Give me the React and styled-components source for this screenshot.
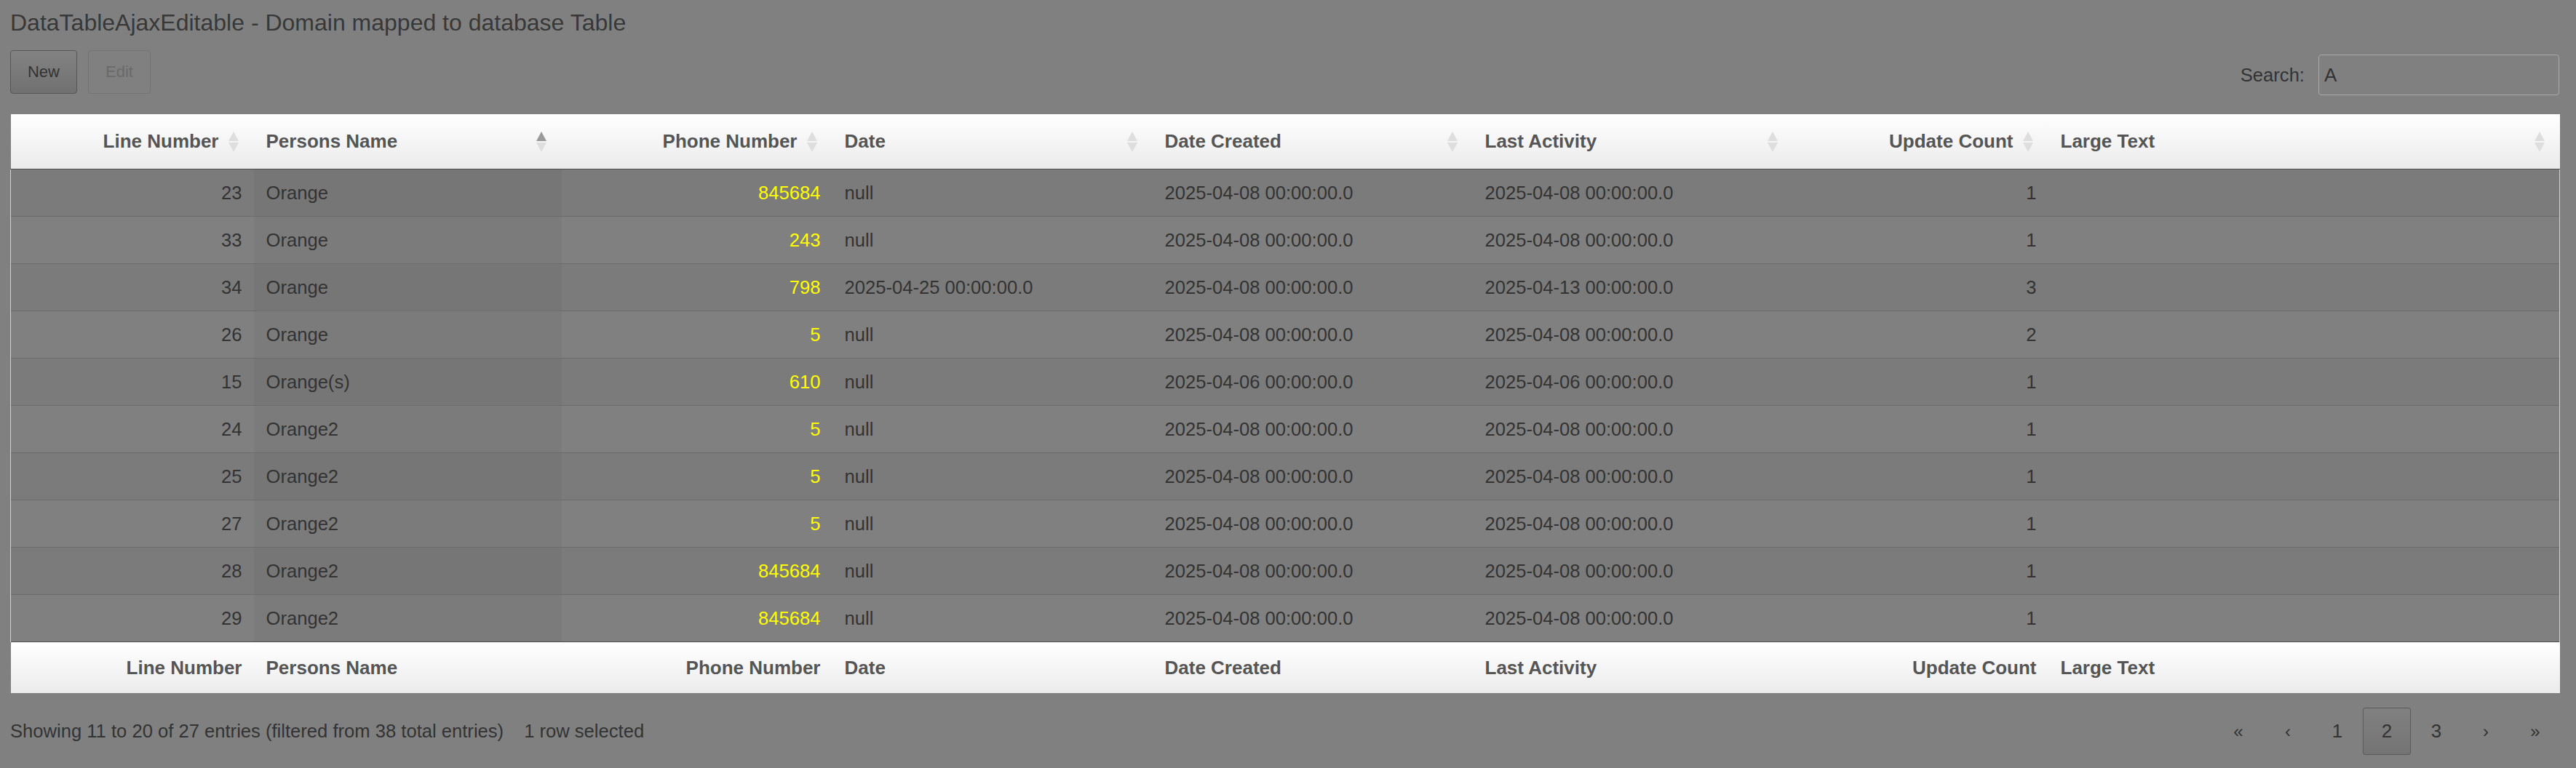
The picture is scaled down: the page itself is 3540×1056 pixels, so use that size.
import React from "react";
import styled, { createGlobalStyle } from "styled-components";

const GlobalStyle = createGlobalStyle`
    html, body {
        margin: 0;
        background: #808080;
    }
    body {
        font-family: 'Liberation Sans', Arial, sans-serif;
        color: #333;
    }
`

const Page = styled.div`
    padding: 13px 23px 0 14px;
    font-size: 25.6px;
`
const Title = styled.h1`
    margin: 0 0 20px 0;
    font-size: 32px;
    line-height: 36px;
    font-weight: 400;
    color: #383838;
`
const Toolbar = styled.div`
    display: flex;
    justify-content: space-between;
    align-items: flex-start;
    height: 62px;
    margin-bottom: 26px;
`
const ButtonGroup = styled.div`
    display: flex;
    gap: 15px;
`
const Button = styled.button`
    width: ${p => p.$width}px;
    height: 60px;
    font-family: inherit;
    font-size: 22px;
    border-radius: 4px;
    border: 1px solid ${p => (p.disabled ? "#747474" : "#575757")};
    color: ${p => (p.disabled ? "#6a6a6a" : "#333")};
    background: ${p => (p.disabled ? "#808080" : "linear-gradient(#838383, #707070)")};
    padding: 0;
`
const SearchLabel = styled.label`
    display: flex;
    align-items: center;
    gap: 19px;
    margin-top: 6px;
    color: #333;
`
const SearchInput = styled.input`
    width: 331px;
    height: 56px;
    box-sizing: border-box;
    border: 1px solid #a9a9a9;
    border-radius: 4px;
    background: transparent;
    font-family: inherit;
    font-size: 26px;
    color: #333;
    padding: 0 7px;
    outline: none;
`
const Table = styled.table`
    width: 100%;
    table-layout: fixed;
    border-collapse: collapse;
    font-size: 25.6px;
`
const HeadCell = styled.th`
    position: relative;
    height: 75px;
    padding: 0 ${p => (p.$align === "right" ? 48 : 16)}px 0 ${p => (p.$align === "right" ? 16 : 17)}px;
    text-align: ${p => p.$align || "left"};
    font-size: 26px;
    font-weight: 700;
    color: #555;
    background: linear-gradient(#ffffff, #ebebeb);
    border-bottom: 1px solid #4f4f4f;
    white-space: nowrap;
`
const FootCell = styled.th`
    height: 70px;
    padding: 0 16px 0 17px;
    text-align: ${p => p.$align || "left"};
    font-size: 26px;
    font-weight: 700;
    color: #555;
    background: linear-gradient(#ffffff, #ebebeb);
    border-top: 1px solid #4f4f4f;
    white-space: nowrap;
`
const SortMark = styled.svg`
    position: absolute;
    right: 21px;
    top: 50%;
    margin-top: -14px;
`
const Row = styled.tr`
    background: ${p => (p.$odd ? "#7b7b7b" : "#808080")};
    border-bottom: 1px solid #6c6c6c;
    &:last-child {
        border-bottom: 1px solid #cfcfcf;
    }
`
const Cell = styled.td`
    height: 64px;
    padding: 0 16px 0 17px;
    text-align: ${p => p.$align || "left"};
    color: ${p => (p.$yellow ? "#ffff00" : "#333")};
    background: ${p => (p.$sorted ? "rgba(0,0,0,0.035)" : "transparent")};
    white-space: nowrap;
    overflow: hidden;
    &:first-child {
        border-left: 1px solid #cfcfcf;
    }
    &:last-child {
        border-right: 1px solid #cfcfcf;
    }
`
const Bottom = styled.div`
    display: flex;
    justify-content: space-between;
    align-items: center;
    margin-top: 20px;
    height: 65px;
`
const Info = styled.div`
    display: flex;
    gap: 28px;
    color: #333;
`
const Pager = styled.div`
    display: flex;
    gap: 2px;
`
const PageButton = styled.span`
    width: 66px;
    height: 65px;
    box-sizing: border-box;
    display: flex;
    align-items: center;
    justify-content: center;
    color: #333;
    font-size: ${p => (p.$arrow ? 24 : 26)}px;
    border-radius: 3px;
    border: 1px solid ${p => (p.$current ? "#5a5a5a" : "transparent")};
    background: ${p => (p.$current ? "linear-gradient(#808080, #747474)" : "transparent")};
`

const columns = [
    { label: "Line Number", width: 334, align: "right" },
    { label: "Persons Name", width: 423, sort: "asc" },
    { label: "Phone Number", width: 372, align: "right" },
    { label: "Date", width: 440 },
    { label: "Date Created", width: 440 },
    { label: "Last Activity", width: 440 },
    { label: "Update Count", width: 351, align: "right" },
    { label: "Large Text", width: 703 },
]

const d8 = "2025-04-08 00:00:00.0"
const rows = [
    [23, "Orange", 845684, "null", d8, d8, 1],
    [33, "Orange", 243, "null", d8, d8, 1],
    [34, "Orange", 798, "2025-04-25 00:00:00.0", d8, "2025-04-13 00:00:00.0", 3],
    [26, "Orange", 5, "null", d8, d8, 2],
    [15, "Orange(s)", 610, "null", "2025-04-06 00:00:00.0", "2025-04-06 00:00:00.0", 1],
    [24, "Orange2", 5, "null", d8, d8, 1],
    [25, "Orange2", 5, "null", d8, d8, 1],
    [27, "Orange2", 5, "null", d8, d8, 1],
    [28, "Orange2", 845684, "null", d8, d8, 1],
    [29, "Orange2", 845684, "null", d8, d8, 1],
]

const SortIcon = ({ dir }) => (
    <SortMark width="14" height="28" viewBox="0 0 14 28">
        <polygon points="7,0 14,13 0,13" fill={dir === "asc" ? "#9a9a9a" : "#dedede"} />
        <polygon points="0,15 14,15 7,28" fill="#dedede" />
    </SortMark>
)

const App = () => {
    return (
        <Page>
            <GlobalStyle />
            <Title>DataTableAjaxEditable - Domain mapped to database Table</Title>
            <Toolbar>
                <ButtonGroup>
                    <Button $width={92}>New</Button>
                    <Button $width={86} disabled>Edit</Button>
                </ButtonGroup>
                <SearchLabel>
                    Search:
                    <SearchInput defaultValue="A" />
                </SearchLabel>
            </Toolbar>
            <Table>
                <colgroup>
                    {columns.map(c => <col key={c.label} style={{ width: c.width }} />)}
                </colgroup>
                <thead>
                    <tr>
                        {columns.map(c => (
                            <HeadCell key={c.label} $align={c.align}>
                                {c.label}
                                <SortIcon dir={c.sort} />
                            </HeadCell>
                        ))}
                    </tr>
                </thead>
                <tbody>
                    {rows.map((r, i) => (
                        <Row key={i} $odd={i % 2 === 0}>
                            <Cell $align="right">{r[0]}</Cell>
                            <Cell $sorted>{r[1]}</Cell>
                            <Cell $align="right" $yellow>{r[2]}</Cell>
                            <Cell>{r[3]}</Cell>
                            <Cell>{r[4]}</Cell>
                            <Cell>{r[5]}</Cell>
                            <Cell $align="right">{r[6]}</Cell>
                            <Cell></Cell>
                        </Row>
                    ))}
                </tbody>
                <tfoot>
                    <tr>
                        {columns.map(c => (
                            <FootCell key={c.label} $align={c.align}>{c.label}</FootCell>
                        ))}
                    </tr>
                </tfoot>
            </Table>
            <Bottom>
                <Info>
                    <span>Showing 11 to 20 of 27 entries (filtered from 38 total entries)</span>
                    <span>1 row selected</span>
                </Info>
                <Pager>
                    <PageButton $arrow>«</PageButton>
                    <PageButton $arrow>‹</PageButton>
                    <PageButton>1</PageButton>
                    <PageButton $current>2</PageButton>
                    <PageButton>3</PageButton>
                    <PageButton $arrow>›</PageButton>
                    <PageButton $arrow>»</PageButton>
                </Pager>
            </Bottom>
        </Page>
    )
}

export default App;
